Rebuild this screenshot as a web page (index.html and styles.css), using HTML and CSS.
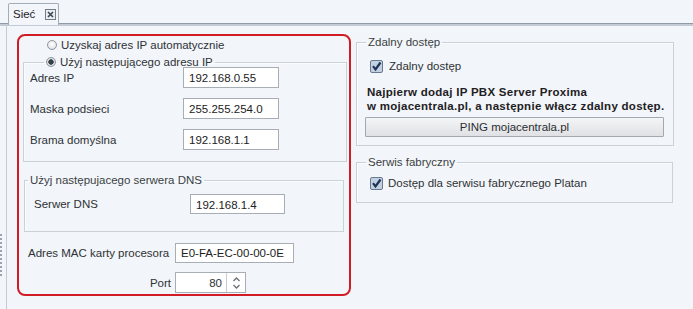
FILE: index.html
```html
<!DOCTYPE html>
<html lang="pl">
<head>
    <meta charset="utf-8">
    <title>Sieć</title>
    <link rel="stylesheet" href="styles.css">
</head>
<body>
    <nav class="tab-strip">
        <div class="tab">
            <span class="tab-title">Sieć</span>
            <svg class="tab-close" width="11" height="11" viewBox="0 0 11 11">
                <rect x="0.5" y="0.5" width="10" height="10" fill="#e9edf1" stroke="#737d88"/>
                <path d="M3 3 L8 8 M8 3 L3 8" stroke="#3d4650" stroke-width="1.6"/>
            </svg>
        </div>
    </nav>

    <div class="workspace">
        <div class="splitter"><div class="splitter-grip"></div></div>

        <main class="page">
            <section class="highlight">
                <label class="radio-row auto-ip">
                    <span class="radio"></span>
                    <span>Uzyskaj adres IP automatycznie</span>
                </label>

                <fieldset class="group ip-group">
                    <legend class="radio-row">
                        <span class="radio checked"></span>
                        <span>Użyj następującego adresu IP</span>
                    </legend>
                    <div class="form-grid ip-grid">
                        <span class="field-label">Adres IP</span>
                        <span class="text-input">192.168.0.55</span>
                        <span class="field-label">Maska podsieci</span>
                        <span class="text-input">255.255.254.0</span>
                        <span class="field-label">Brama domyślna</span>
                        <span class="text-input">192.168.1.1</span>
                    </div>
                </fieldset>

                <fieldset class="group dns-group">
                    <legend>Użyj następujacego serwera DNS</legend>
                    <div class="form-grid dns-grid">
                        <span class="field-label">Serwer DNS</span>
                        <span class="text-input">192.168.1.4</span>
                    </div>
                </fieldset>

                <div class="form-grid mac-grid">
                    <span class="field-label">Adres MAC karty procesora</span>
                    <span class="text-input">E0-FA-EC-00-00-0E</span>
                    <span class="field-label port-label">Port</span>
                    <span class="spin-input">
                        <span class="spin-value">80</span>
                        <span class="spin-buttons">
                            <svg width="9" height="14" viewBox="0 0 9 14">
                                <path d="M1.5 5 L4.5 2 L7.5 5 M1.5 9 L4.5 12 L7.5 9" fill="none" stroke="#6a6f75" stroke-width="1.3"/>
                            </svg>
                        </span>
                    </span>
                </div>
            </section>

            <section class="side">
                <fieldset class="group remote-group">
                    <legend>Zdalny dostęp</legend>
                    <label class="check-row">
                        <svg class="checkbox" width="13" height="13" viewBox="0 0 13 13">
                            <rect x="0.5" y="0.5" width="12" height="12" rx="1.5" fill="#c3d0e0" stroke="#677a92"/>
                            <path d="M3 6.2 L5.5 9.5 L10.5 2.5" fill="none" stroke="#1d3358" stroke-width="2.2"/>
                        </svg>
                        <span>Zdalny dostęp</span>
                    </label>
                    <p class="remote-note">Najpierw dodaj IP PBX Server Proxima<br>w mojacentrala.pl, a następnie włącz zdalny dostęp.</p>
                    <button class="ping-button">PING mojacentrala.pl</button>
                </fieldset>

                <fieldset class="group service-group">
                    <legend>Serwis fabryczny</legend>
                    <label class="check-row">
                        <svg class="checkbox" width="13" height="13" viewBox="0 0 13 13">
                            <rect x="0.5" y="0.5" width="12" height="12" rx="1.5" fill="#c3d0e0" stroke="#677a92"/>
                            <path d="M3 6.2 L5.5 9.5 L10.5 2.5" fill="none" stroke="#1d3358" stroke-width="2.2"/>
                        </svg>
                        <span>Dostęp dla serwisu fabrycznego Platan</span>
                    </label>
                </fieldset>
            </section>
        </main>
    </div>
</body>
</html>
```

FILE: styles.css
```css
:root {
    --bg: #f2f5f9;
    --text: #2e3236;
    --line: #cbd1d8;
    --input-border: #a7aeb6;
    --red: #d01d25;
}

* {
    margin: 0;
    padding: 0;
    box-sizing: border-box;
}

body {
    font-family: 'Liberation Sans', Arial, sans-serif;
    font-size: 11.5px;
    line-height: 14px;
    color: var(--text);
    background: var(--bg);
    width: 693px;
    height: 309px;
    overflow: hidden;
}

/* tab strip */

.tab-strip {
    height: 26px;
    padding: 3px 0 0 8px;
    border-bottom: 2px solid #c3ccd6;
    box-shadow: inset 0 -1px 0 #8f9ba8;
    display: flex;
}

.tab {
    width: 51px;
    height: 22px;
    border: 1px solid #a3adb8;
    border-bottom: none;
    border-radius: 2px 2px 0 0;
    background: var(--bg);
    display: flex;
    align-items: center;
    padding: 0 0 1px 4px;
    gap: 10px;
    position: relative;
    z-index: 1;
}

.tab-title {
    color: #1f2327;
}

/* workspace */

.workspace {
    display: flex;
    height: 283px;
}

.splitter {
    width: 7px;
    border-right: 1px solid #c4cbd3;
}

.splitter-grip {
    margin-top: 208px;
    height: 42px;
    width: 2px;
    border-left: 2px dotted #9aa3ad;
}

.page {
    flex: 1;
    display: flex;
    align-items: flex-start;
    gap: 5px;
    padding: 8px 0 0 10px;
}

/* red highlighted block */

.highlight {
    width: 334px;
    height: 262px;
    border: 2px solid var(--red);
    border-radius: 8px;
    padding: 1px 2px 0 2px;
}

.radio-row {
    display: flex;
    align-items: center;
    gap: 4px;
}

.auto-ip {
    padding-left: 26px;
    margin-top: 1px;
}

.radio {
    width: 10px;
    height: 10px;
    border-radius: 50%;
    border: 1px solid #8f979f;
    background: radial-gradient(circle at 50% 40%, #ffffff 0, #e6e9ec 60%, #c9ced3 100%);
}

.radio.checked {
    background: radial-gradient(circle, #3a3f45 0, #3a3f45 2.4px, #dfe3e7 3px, #c9ced3 100%);
}

.group {
    border: 1px solid var(--line);
    box-shadow: inset 1px 1px 0 #fbfcfd;
}

.group legend {
    padding: 0 2px;
    color: #3a3f44;
    line-height: 14px;
}

.ip-group {
    margin: 3px 0 0 2px;
    width: 324px;
    padding: 0 6px 11px 6px;
}

.ip-group legend {
    margin-left: 14px;
    color: var(--text);
    position: relative;
    z-index: 1;
}

.form-grid {
    display: grid;
    align-items: center;
}

.ip-grid {
    grid-template-columns: 153px 96px;
    row-gap: 10px;
    margin-top: -2px;
}

.text-input {
    height: 21px;
    background: #fff;
    border: 1px solid var(--input-border);
    padding: 3px 0 0 5px;
    color: #222;
    white-space: nowrap;
}

.dns-group {
    margin: 11px 0 0 3px;
    width: 320px;
    padding: 7px 9px 17px 9px;
}

.dns-group legend {
    margin-left: -6px;
}

.dns-grid {
    grid-template-columns: 156px 95px;
}

.dns-grid .text-input {
    height: 20px;
}

.mac-grid {
    grid-template-columns: 147px 119px;
    row-gap: 9px;
    margin: 11px 0 0 7px;
}

.mac-grid .text-input {
    height: 20px;
    padding-top: 2px;
}

.port-label {
    text-align: right;
    padding-right: 4px;
}

.spin-input {
    width: 71px;
    height: 21px;
    background: #fff;
    border: 1px solid var(--input-border);
    display: flex;
}

.spin-value {
    flex: 1;
    text-align: right;
    padding: 3px 4px 0 0;
}

.spin-buttons {
    width: 19px;
    border-left: 1px solid #c9cdd2;
    display: flex;
    align-items: center;
    justify-content: center;
}

/* right column */

.side {
    width: 318px;
    display: flex;
    flex-direction: column;
    gap: 9px;
    margin-top: 1px;
}

.remote-group {
    height: 111px;
    padding: 10px 9px 0 8px;
}

.remote-group legend,
.service-group legend {
    margin-left: 1px;
}

.check-row {
    display: flex;
    align-items: center;
    gap: 6px;
    padding-left: 5px;
}

.remote-note {
    font-weight: bold;
    color: #1e2124;
    margin: 12px 0 0 2px;
    white-space: nowrap;
    letter-spacing: 0.28px;
}

.ping-button {
    display: block;
    width: 299px;
    height: 20px;
    margin-top: 4px;
    font: inherit;
    color: #2a2e33;
    border: 1px solid #a2a8af;
    border-radius: 1px;
    background: linear-gradient(#f4f5f6, #dfe1e4);
}

.service-group {
    width: 317px;
    padding: 7px 9px 12px 8px;
}

.service-group .check-row {
    gap: 5px;
}
```
